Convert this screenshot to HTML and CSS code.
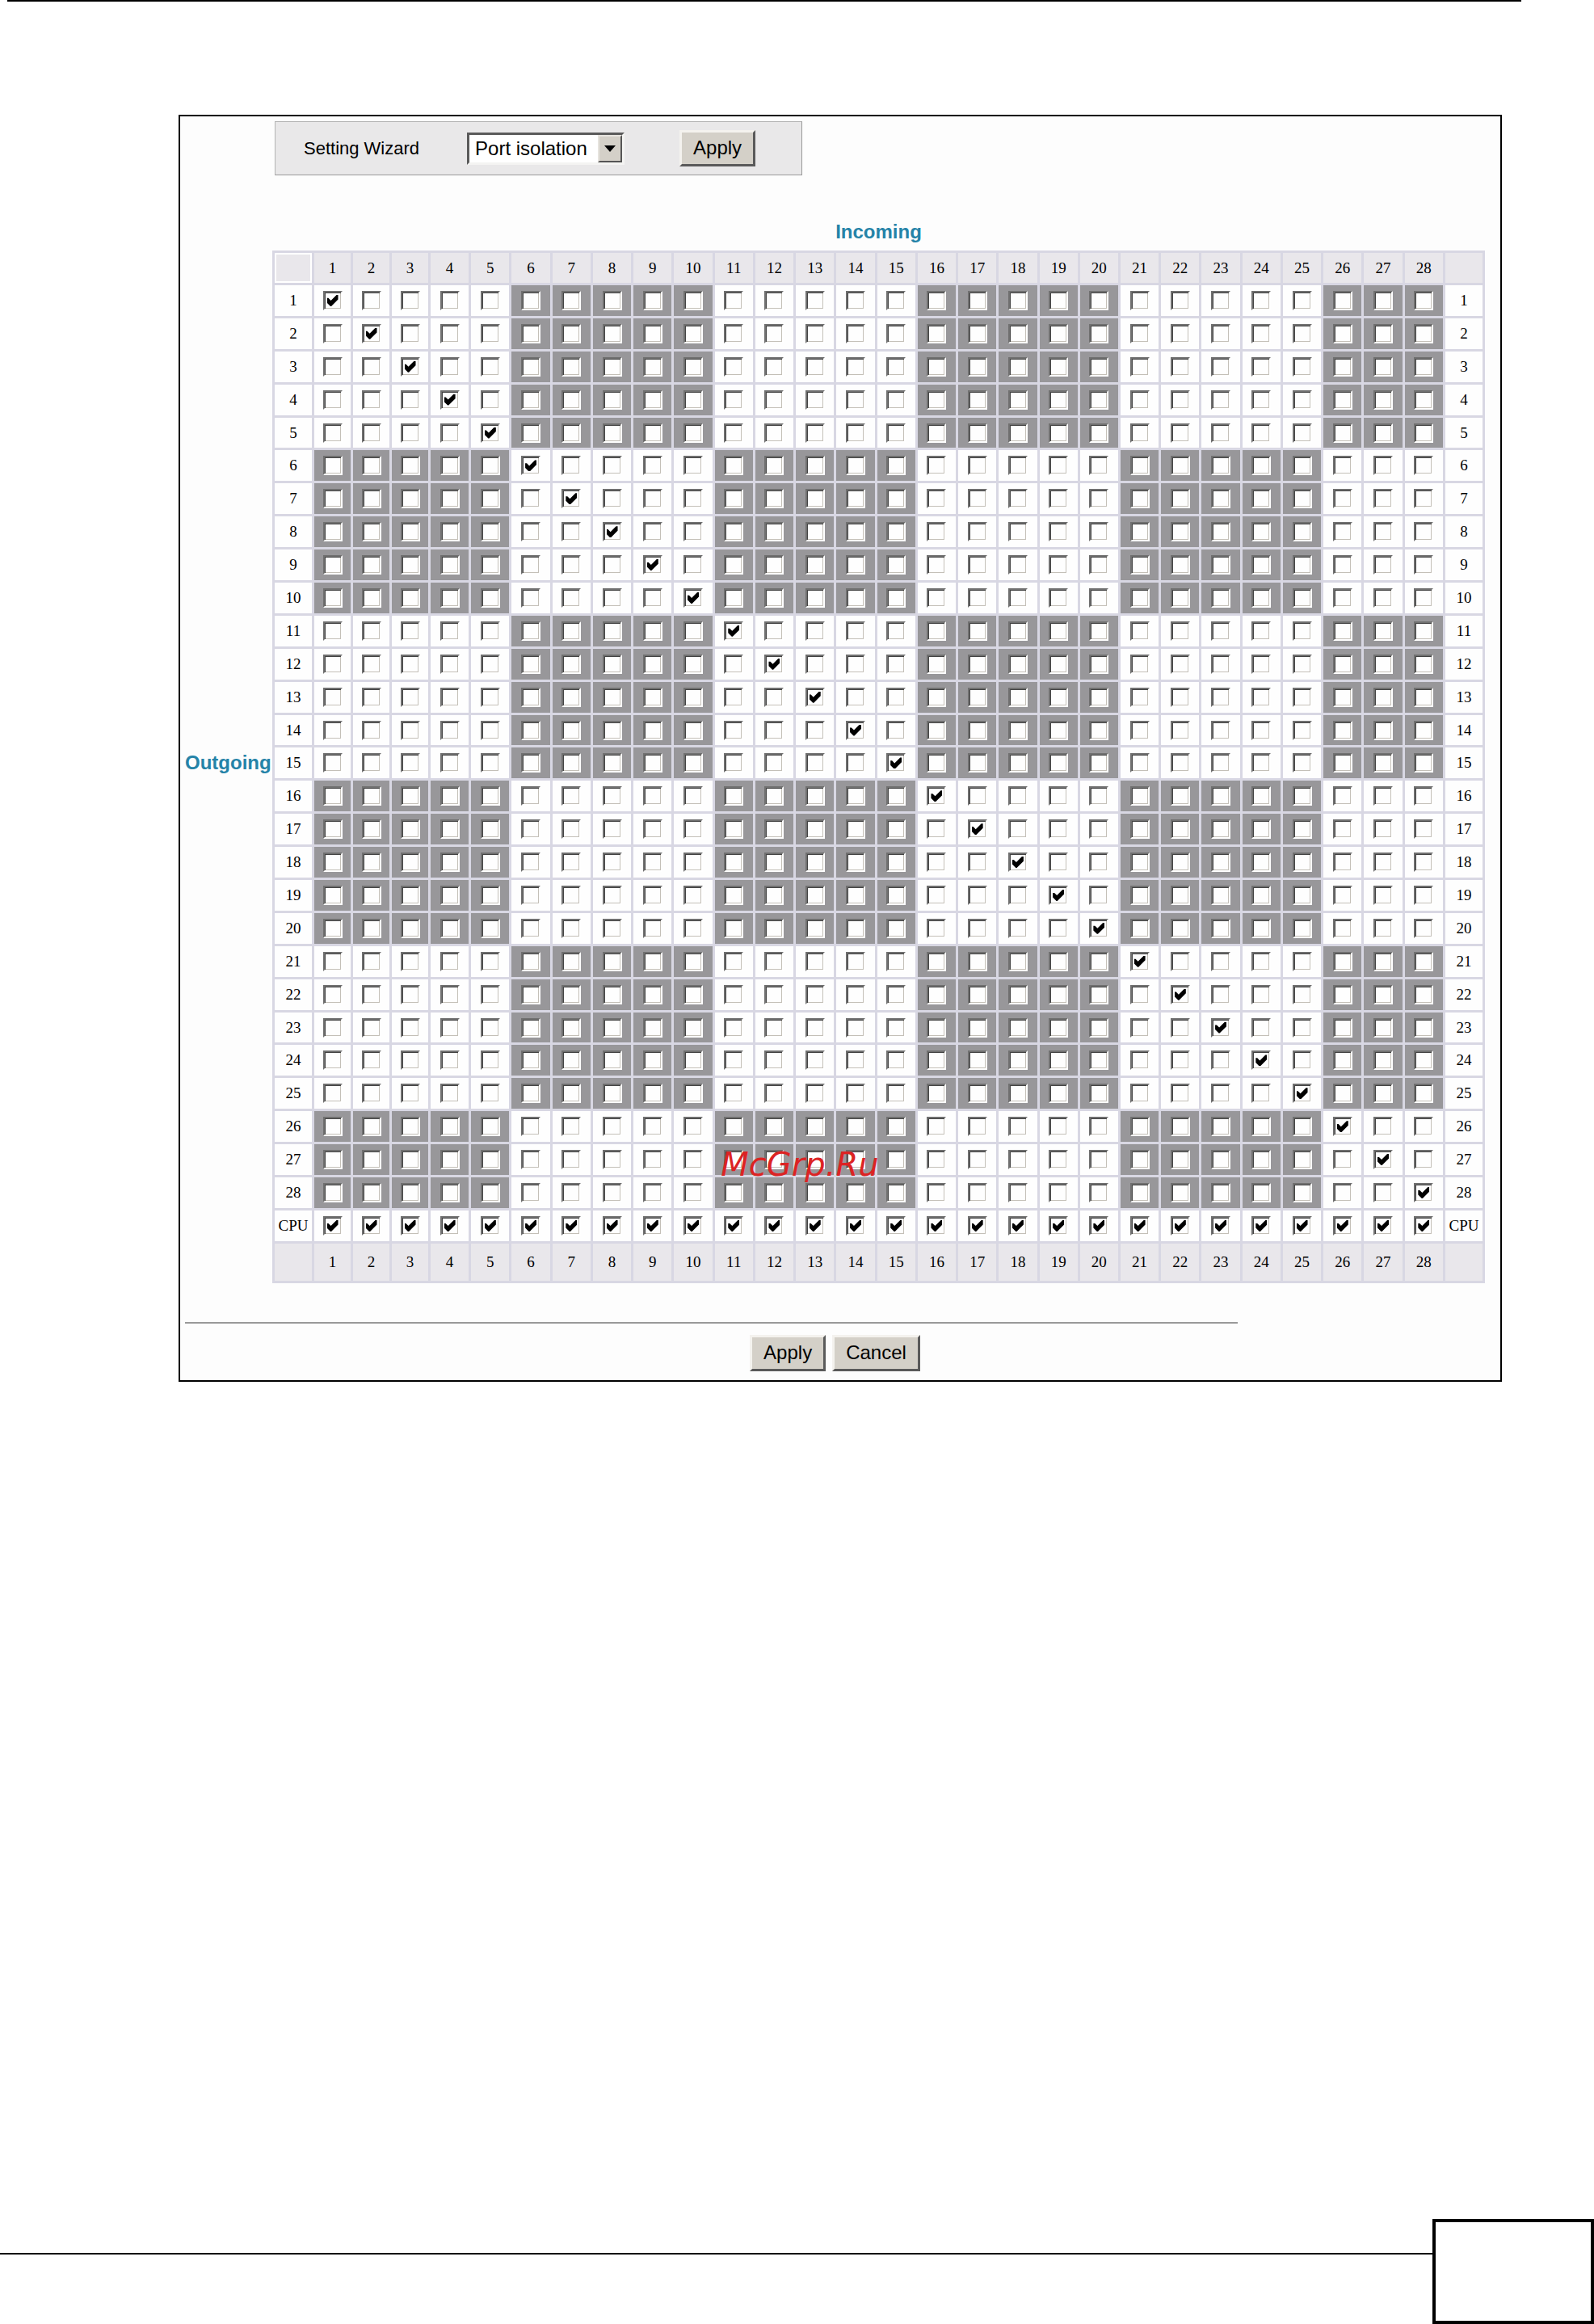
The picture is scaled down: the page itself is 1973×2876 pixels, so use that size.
FILE: index.html
```html
<!DOCTYPE html>
<html lang="en">
<head>
<meta charset="utf-8">
<title>Port isolation</title>
<link rel="stylesheet" href="styles.css">
</head>
<body>
<header class="page-rule"></header>
<main class="frame">
  <form class="settings">
    <div class="wizard">
      <label class="wizard-label" for="wizard">Setting Wizard</label>
      <div class="dropdown">
        <select id="wizard" class="dropdown-select">
          <option>Port isolation</option>
          <option>All connected</option>
        </select>
        <span class="dropdown-arrow" aria-hidden="true">
          <svg width="14" height="8" viewBox="0 0 14 8"><path d="M0 0h14L7 8z"/></svg>
        </span>
      </div>
      <button type="button" class="button">Apply</button>
    </div>
    <div class="matrix">
      <div class="axis axis-incoming">Incoming</div>
      <div class="axis axis-outgoing">Outgoing</div>
      <div class="matrix-body">
        <table class="ports">
          <colgroup><col class="col-label"><col class="col-narrow" span="3"><col span="25"><col class="col-label"></colgroup>
          <thead></thead>
          <tbody></tbody>
          <tfoot></tfoot>
        </table>
        <span class="watermark">McGrp.Ru</span>
      </div>
    </div>
    <hr class="divider">
    <div class="actions">
      <button type="submit" class="button">Apply</button>
      <button type="reset" class="button">Cancel</button>
    </div>
  </form>
</main>
<footer class="page-footer">
  <div class="footer-line"></div>
  <div class="page-number"></div>
</footer>
<script src="ports.js"></script>
</body>
</html>
```

FILE: styles.css
```css
* { box-sizing: border-box; }

body {
  margin: 0;
  min-height: 100vh;
  display: flex;
  flex-direction: column;
  background: #fff;
  color: #000;
  font-family: "Liberation Sans", Arial, sans-serif;
  font-size: 24px;
  line-height: 28px;
}

.page-rule {
  height: 2px;
  margin: 0 90px 0 9px;
  background: #000;
}

.frame {
  margin: 140px 114px 40px 221px;
  padding: 6px 19px 11px 6px;
  border: 2px solid #000;
  background: #fdfdfd;
}

.wizard {
  display: flex;
  align-items: center;
  width: fit-content;
  height: 67px;
  margin-left: 111px;
  padding: 0 57px 0 35px;
  border: 1px solid #b4b4b4;
  border-right-color: #999;
  border-bottom-color: #999;
  background: #e9e8e9;
}

.wizard-label {
  margin-right: 59px;
  font-size: 22px;
}

.dropdown {
  position: relative;
  margin-right: 68px;
}

.dropdown-select {
  display: block;
  width: 195px;
  height: 40px;
  padding: 0 34px 0 7px;
  appearance: none;
  border: 3px solid;
  border-color: #5a5a5a #f4f4f2 #f4f4f2 #5a5a5a;
  border-radius: 0;
  background: #fff;
  color: #000;
  font: inherit;
}

.dropdown-arrow {
  position: absolute;
  top: 3px;
  right: 3px;
  bottom: 3px;
  display: flex;
  align-items: center;
  justify-content: center;
  width: 30px;
  border: 2px solid;
  border-color: #e6e3de #555 #555 #e6e3de;
  background: #d4d0c8;
  pointer-events: none;
}

.button {
  height: 45px;
  padding: 0 14px 2px;
  border: 3px solid;
  border-color: #f4f2ee #5a5a5a #5a5a5a #f4f2ee;
  border-radius: 0;
  background: #d4d0c8;
  color: #000;
  font: inherit;
}

.matrix {
  display: grid;
  grid-template-columns: 108px 1fr;
  row-gap: 9px;
  margin-top: 56px;
}

.axis {
  color: #2583a8;
  font-weight: bold;
}

.axis-incoming {
  grid-column: 2;
  text-align: center;
}

.axis-outgoing {
  align-self: center;
  padding-bottom: 10px;
}

.matrix-body { position: relative; }

.ports {
  width: 100%;
  height: 1278px;
  table-layout: fixed;
  border-collapse: separate;
  border-spacing: 3px;
  background: #d8d7e3;
  font-family: "Liberation Serif", "Times New Roman", serif;
  font-size: 19px;
  line-height: 24px;
  text-align: center;
}

.col-label { width: 46px; }
.col-narrow { width: 45px; }

.ports th,
.ports td {
  height: 37px;
  padding: 0;
  background: #fefefe;
  font-weight: normal;
  vertical-align: middle;
}

.ports thead th,
.ports thead td,
.ports tfoot th,
.ports tfoot td { background: #e9e7eb; }

.ports thead td:first-child { border: 2px solid #fff; }

.ports tfoot th,
.ports tfoot td { height: 46px; }

.ports .shaded { background: #98979a; }

.port-box {
  display: block;
  width: 24px;
  height: 24px;
  margin: 0 auto;
  appearance: none;
  border: 2px solid;
  border-color: #707070 #fff #fff #707070;
  background: #fefefe;
  box-shadow: inset 1px 1px #444, inset -1px -1px #c4c0b8;
}

.port-box:checked::before {
  content: "";
  display: block;
  width: 14px;
  height: 14px;
  margin: 3px;
  background: #000;
  clip-path: polygon(0 28%, 14% 28%, 36% 50%, 86% 0, 100% 0, 100% 40%, 40% 100%, 32% 100%, 0 68%);
}

.watermark {
  position: absolute;
  left: 37%;
  bottom: 124px;
  color: #dc2323;
  font: italic 40px/46px "DejaVu Sans", Verdana, sans-serif;
  pointer-events: none;
}

.divider {
  width: 81%;
  height: 2px;
  margin: 48px 0 14px;
  border: 0;
  background: #999;
}

.actions {
  display: flex;
  justify-content: center;
  gap: 8px;
}

.page-footer {
  display: flex;
  height: 130px;
  margin-top: auto;
}

.footer-line {
  flex: 1;
  height: 2px;
  margin-top: 42px;
  background: #000;
}

.page-number {
  width: 200px;
  border: 4px solid #000;
}
```

FILE: ports.js
```js
const PORTS = 28;
const GROUP = 5;
const group = port => Math.floor((port - 1) / GROUP);
const ports = Array.from({ length: PORTS }, (_, i) => i + 1);

const numberRow = '<tr><td></td>' +
  ports.map(p => `<th scope="col">${p}</th>`).join('') + '<td></td></tr>';

const portRow = (label, checked, shaded) =>
  `<tr><th scope="row">${label}</th>` +
  ports.map(p =>
    `<td${shaded(p) ? ' class="shaded"' : ''}><input type="checkbox" class="port-box"` +
    ` aria-label="Outgoing ${label}, incoming ${p}"${checked(p) ? ' checked' : ''}></td>`
  ).join('') +
  `<th scope="row">${label}</th></tr>`;

const table = document.querySelector('.ports');
table.tHead.innerHTML = numberRow;
table.tFoot.innerHTML = numberRow;
table.tBodies[0].innerHTML =
  ports.map(row => portRow(row, p => p === row, p => (group(p) + group(row)) % 2 === 1)).join('') +
  portRow('CPU', () => true, () => false);
```
